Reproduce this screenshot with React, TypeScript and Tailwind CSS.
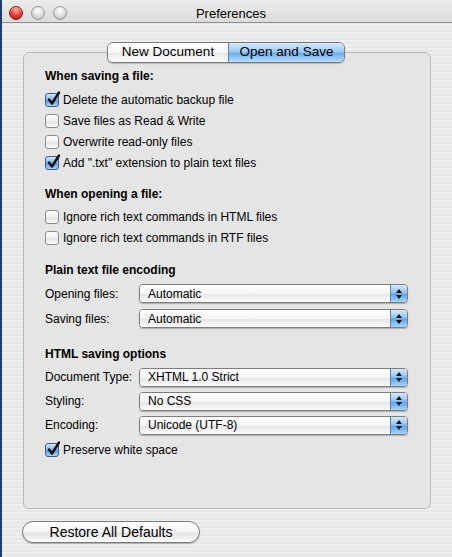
import type { ReactNode } from 'react';

const font = { fontFamily: '"Liberation Sans", Arial, sans-serif' };

function Light({ color }: { color: 'red' | 'gray' }) {
   return (
      <span
         className={
            color === 'red'
               ? 'block h-[14px] w-[14px] rounded-full border border-[#8e1a1a] bg-[radial-gradient(circle_at_50%_30%,#ffb3a8_0%,#e8433a_45%,#a8100c_100%)] shadow-[inset_0_1px_1px_rgba(255,255,255,0.6)]'
               : 'block h-[14px] w-[14px] rounded-full border border-[#9a9a9a] bg-[radial-gradient(circle_at_50%_30%,#ffffff_0%,#dedede_50%,#b4b4b4_100%)]'
         }
      />
   );
}

function Checkbox({ checked, label }: { checked?: boolean; label: string }) {
   return (
      <div className="flex h-[21px] items-center">
         <span
            className={
               checked
                  ? 'relative block h-[14px] w-[14px] rounded-[3px] border border-[#3f5f8f] bg-[linear-gradient(180deg,#cfe6fb_0%,#7fb5ec_50%,#5d9be0_55%,#a9d2f7_100%)]'
                  : 'relative block h-[14px] w-[14px] rounded-[3px] border border-[#8c8c8c] bg-[linear-gradient(180deg,#ffffff_0%,#f0f0f0_50%,#e2e2e2_55%,#fafafa_100%)]'
            }
         >
            {checked && (
               <svg className="absolute -top-[3px] left-[1px]" width="14" height="15" viewBox="0 0 14 15">
                  <path
                     d="M2 8.5 L5 12.5 L12 1.5"
                     fill="none"
                     stroke="#111"
                     strokeWidth="2.4"
                     strokeLinecap="round"
                     strokeLinejoin="round"
                  />
               </svg>
            )}
         </span>
         <span className="ml-[4px] text-[12px] text-black">{label}</span>
      </div>
   );
}

function Popup({ value }: { value: string }) {
   return (
      <div className="flex h-[19px] w-[269px] overflow-hidden rounded-[4px] border border-[#7d7d7d] shadow-[0_1px_1px_rgba(0,0,0,0.25)]">
         <div className="flex flex-1 items-center bg-[linear-gradient(180deg,#ffffff_0%,#f4f4f4_50%,#e6e6e6_55%,#fbfbfb_100%)] pl-[8px] text-[12px] text-black">
            {value}
         </div>
         <div className="flex w-[17px] flex-col items-center justify-center gap-[2px] border-l border-[#5b7fb0] bg-[linear-gradient(180deg,#d6ebfd_0%,#8ec3f3_45%,#5ea5ea_55%,#a8d6fb_100%)]">
            <svg width="6" height="4" viewBox="0 0 6 4">
               <path d="M3 0 L6 4 L0 4 Z" fill="#111" />
            </svg>
            <svg width="6" height="4" viewBox="0 0 6 4">
               <path d="M0 0 L6 0 L3 4 Z" fill="#111" />
            </svg>
         </div>
      </div>
   );
}

function PopupRow({ label, value, h }: { label: string; value: string; h: string }) {
   return (
      <div className={`flex items-center ${h}`}>
         <span className="w-[94px] text-[12px] text-black">{label}</span>
         <Popup value={value} />
      </div>
   );
}

function Heading({ children, className }: { children: ReactNode; className?: string }) {
   return (
      <div className={`flex h-[16px] items-center text-[12px] font-bold text-black ${className ?? ''}`}>
         {children}
      </div>
   );
}

export default function App() {
   return (
      <div className="flex h-[557px] w-[452px] overflow-hidden bg-[#1c3c70] pl-[2px]" style={font}>
         <div className="flex h-full flex-1 flex-col rounded-tl-[6px] bg-[repeating-linear-gradient(180deg,#eeeeee_0px,#eeeeee_2px,#e7e7e7_2px,#e7e7e7_4px)]">
            {/* title bar */}
            <div className="relative flex h-[23px] items-center border-b border-[#8f8f8f] bg-[linear-gradient(180deg,#ececec_0%,#dcdcdc_100%)] pt-[3px]">
               <div className="flex gap-[8px] pl-[7px]">
                  <Light color="red" />
                  <Light color="gray" />
                  <Light color="gray" />
               </div>
               <div className="absolute left-0 right-0 top-[4px] text-center text-[13px] text-black">
                  <span className="relative left-[4px]">Preferences</span>
               </div>
            </div>

            {/* panel with tabs */}
            <div className="relative ml-[21px] mt-[29px] h-[457px] w-[408px] rounded-[6px] border border-[#b9b9b9] bg-[#e5e5e5] pl-[21px] pt-[15px]">
               <div className="absolute -top-[11px] left-[83px] flex h-[21px] w-[238px] overflow-hidden rounded-[6px] border border-[#7a7a7a] text-[13.5px] text-black shadow-[0_1px_1px_rgba(0,0,0,0.2)]">
                  <div className="flex w-[120px] items-center justify-center bg-[linear-gradient(180deg,#ffffff_0%,#f6f6f6_50%,#e8e8e8_55%,#fcfcfc_100%)]">
                     New Document
                  </div>
                  <div className="flex flex-1 items-center justify-center border-l border-[#5f7fae] bg-[linear-gradient(180deg,#d3e9fd_0%,#9ccbf5_45%,#6eb0ee_55%,#b5dcfb_100%)]">
                     Open and Save
                  </div>
               </div>

               <Heading>When saving a file:</Heading>
               <div className="mt-[5px]">
                  <Checkbox checked label="Delete the automatic backup file" />
                  <Checkbox label="Save files as Read & Write" />
                  <Checkbox label="Overwrite read-only files" />
                  <Checkbox checked label={'Add ".txt" extension to plain text files'} />
               </div>

               <Heading className="mt-[13px]">When opening a file:</Heading>
               <div className="mt-[4px]">
                  <Checkbox label="Ignore rich text commands in HTML files" />
                  <Checkbox label="Ignore rich text commands in RTF files" />
               </div>

               <Heading className="mt-[14px]">Plain text file encoding</Heading>
               <div className="mt-[3px]">
                  <PopupRow h="h-[25px]" label="Opening files:" value="Automatic" />
                  <PopupRow h="h-[25px]" label="Saving files:" value="Automatic" />
               </div>

               <Heading className="mt-[15px]">HTML saving options</Heading>
               <div className="mt-[3px]">
                  <PopupRow h="h-[24px]" label="Document Type:" value="XHTML 1.0 Strict" />
                  <PopupRow h="h-[24px]" label="Styling:" value="No CSS" />
                  <PopupRow h="h-[24px]" label="Encoding:" value="Unicode (UTF-8)" />
               </div>
               <div className="mt-[2px]">
                  <Checkbox checked label="Preserve white space" />
               </div>
            </div>

            {/* bottom button */}
            <div className="ml-[20px] mt-[12px]">
               <button
                  type="button"
                  className="flex h-[22px] w-[178px] items-center justify-center rounded-full border border-[#7b7b7b] bg-[linear-gradient(180deg,#ffffff_0%,#f4f4f4_50%,#e4e4e4_55%,#fbfbfb_100%)] text-[14px] text-black shadow-[0_1px_1px_rgba(0,0,0,0.25)]"
               >
                  Restore All Defaults
               </button>
            </div>
         </div>
      </div>
   );
}
